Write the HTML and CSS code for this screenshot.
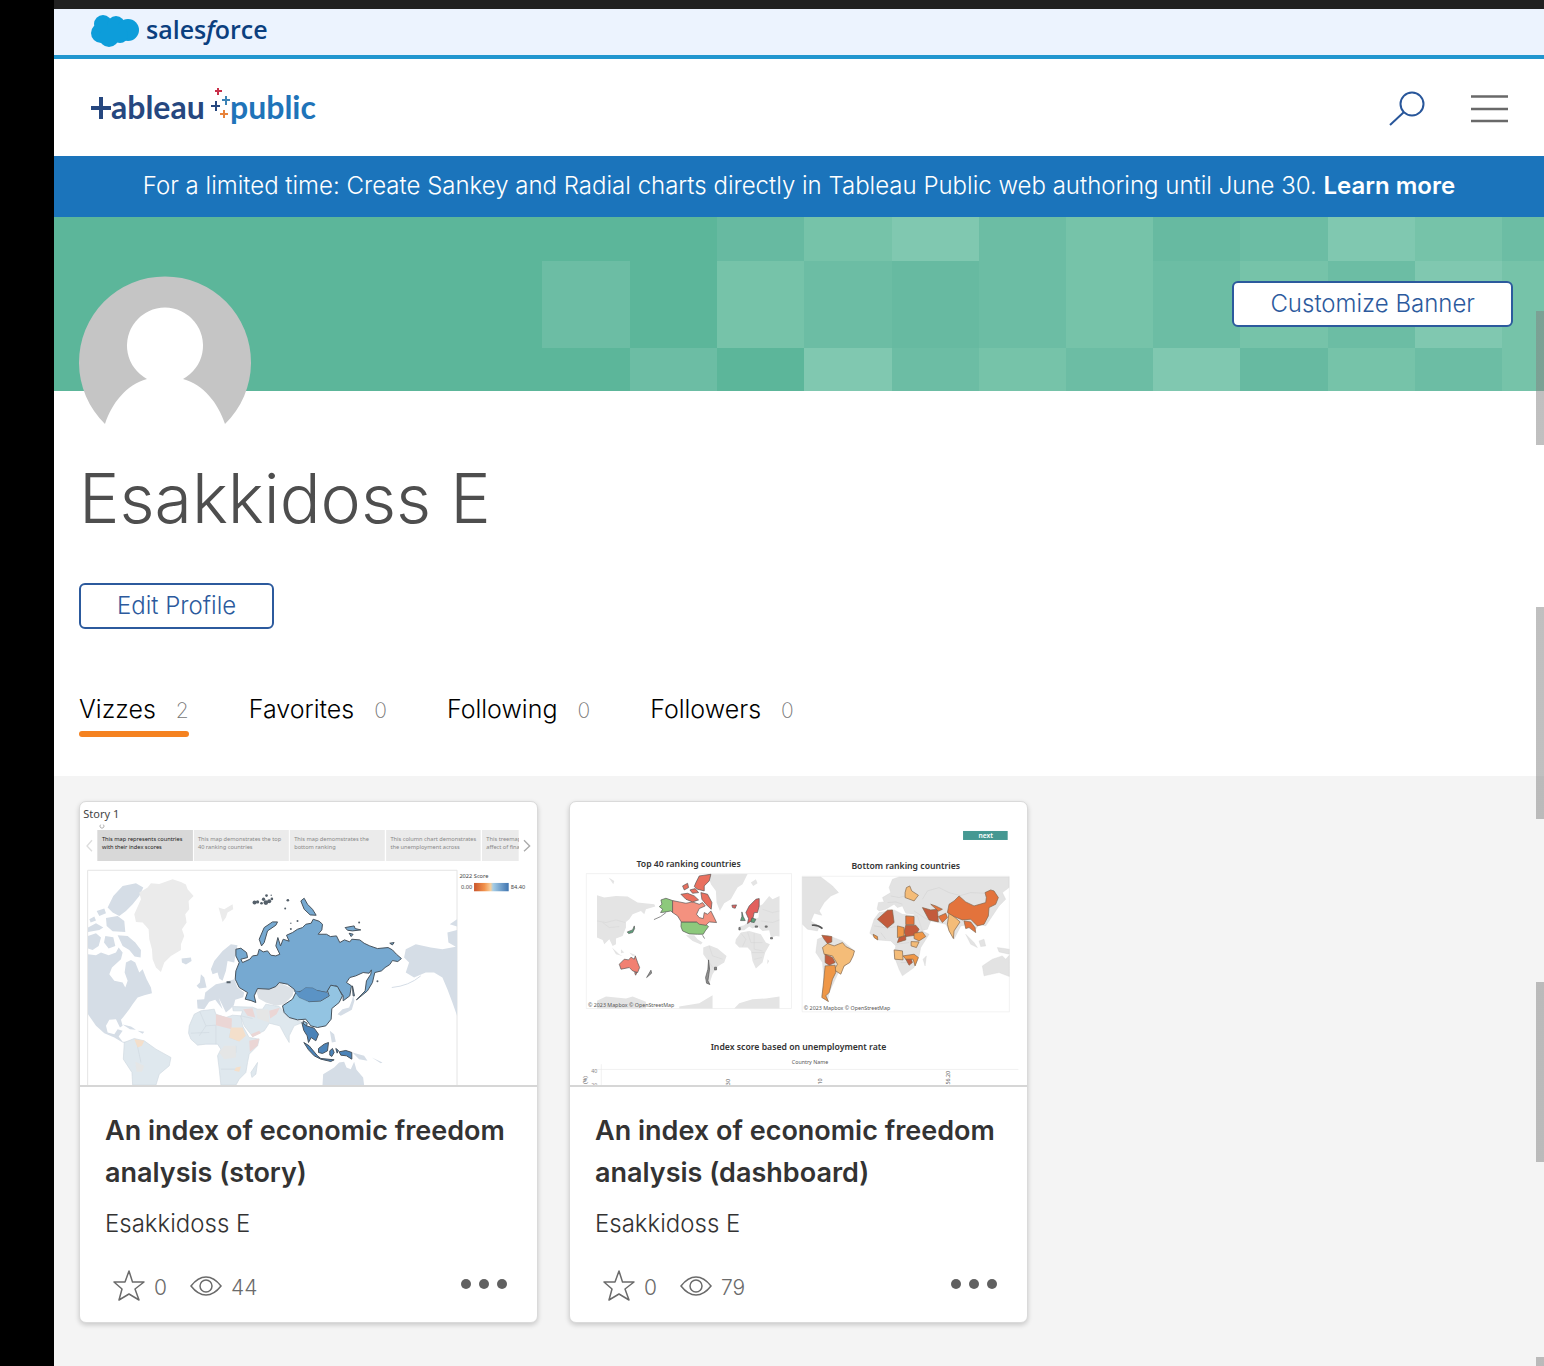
FILE: index.html
```html
<!DOCTYPE html>
<html lang="en">
<head>
<meta charset="utf-8">
<meta name="viewport" content="width=device-width, initial-scale=1">
<title>Esakkidoss E | Tableau Public</title>
<link rel="stylesheet" href="styles.css">
</head>
<body>
<div class="page">
  <div class="scroll-marks" aria-hidden="true"></div>

  <div class="brand-bar">
    <a href="#" class="brand-link" aria-label="Salesforce">
      <svg width="182" height="38" viewBox="0 0 182 38">
        <g fill="#0d9dda"><circle cx="11" cy="20" r="10"/><circle cx="13" cy="11" r="9"/><circle cx="26" cy="12" r="9"/><circle cx="38" cy="17" r="11"/><circle cx="19" cy="24" r="10"/><circle cx="30" cy="22" r="8"/><rect x="12" y="12" width="24" height="14"/></g>
        <text class="sf-text" x="56" y="26">sales<tspan font-style="italic">f</tspan>orce</text>
      </svg>
    </a>
  </div>

  <header class="site-header">
    <a href="#" class="brand-link" aria-label="Tableau Public">
      <svg width="230" height="44" viewBox="0 0 230 44">
        <path d="M1 22H21M11 11V33" fill="none" stroke="#26477f" stroke-width="4"/>
        <text class="tb-text" x="21" y="33" fill="#26477f">ableau</text>
        <text class="tb-text" x="140" y="33" fill="#1f74b9">public</text>
        <g stroke-width="2" fill="none">
          <path d="M128 2v7M125 5h7" stroke="#c9304a"/>
          <path d="M136 10v9M132 14h8" stroke="#3c83b5"/>
          <path d="M126 15v10M121 20h9" stroke="#26477f"/>
          <path d="M134 24v8M130 28h8" stroke="#e8833a"/>
        </g>
      </svg>
    </a>
    <div class="header-tools">
      <button class="icon-button" type="button" aria-label="Search">
        <svg width="36" height="36" viewBox="0 0 36 36" fill="none" stroke="#28569a" stroke-width="2"><circle cx="23" cy="14" r="11.5"/><path d="M15 22L1 35"/></svg>
      </button>
      <button class="icon-button" type="button" aria-label="Menu">
        <svg width="37" height="30" viewBox="0 0 37 30" stroke="#696969" stroke-width="2.5"><path d="M0 3.5H37M0 16H37M0 28H37"/></svg>
      </button>
    </div>
  </header>

  <p class="notice">For a limited time: Create Sankey and Radial charts directly in Tableau Public web authoring until June 30. <a href="#">Learn more</a></p>

  <section class="cover">
    <svg class="cover-pattern" viewBox="0 0 1490 174" preserveAspectRatio="xMaxYMid slice" aria-hidden="true">
      <rect width="1490" height="174" fill="#5cb69a"/>
      <g fill="#67baa1"><path d="M663 0h87v44h-87zM838 44h87v87h-87zM1099 0h87v44h-87zM1186 131h88v43h-88z"/></g>
      <g fill="#6cbda4"><path d="M488 44h88v87h-88zM576 131h87v43h-87zM750 44h88v87h-88zM838 131h87v43h-87zM925 0h87v131h-87zM1012 131h87v43h-87zM1099 44h87v87h-87zM1186 0h88v44h-88zM1274 44h87v87h-87zM1361 131h87v43h-87zM1448 0h42v44h-42z"/></g>
      <g fill="#76c3a9"><path d="M663 44h87v87h-87zM750 0h88v44h-88zM925 131h87v43h-87zM1012 0h87v131h-87zM1186 44h88v87h-88zM1274 131h87v43h-87zM1361 0h87v44h-87zM1448 44h42v130h-42z"/></g>
      <g fill="#80c8b0"><path d="M838 0h87v44h-87zM750 131h88v43h-88zM1099 131h87v43h-87zM1274 0h87v44h-87zM1361 44h87v87h-87z"/></g>
    </svg>
    <button class="button" type="button">Customize Banner</button>
  </section>

  <section class="profile">
    <svg class="avatar" width="172" height="172" viewBox="0 0 172 172" role="img" aria-label="Profile picture">
      <path fill="#c5c5c5" d="M26 148A86 86 0 1 1 146 148V172H26Z"/>
      <path fill="#fff" d="M26 148C33 127 47 109 68 103A38 38 0 1 1 104 103C125 109 139 127 146 148V172H26Z"/>
    </svg>
    <h1 class="name">Esakkidoss E</h1>
    <button class="button" type="button">Edit Profile</button>
    <nav class="tabs">
      <a href="#" class="tab tab-active">Vizzes <span class="count">2</span></a>
      <a href="#" class="tab">Favorites <span class="count">0</span></a>
      <a href="#" class="tab">Following <span class="count">0</span></a>
      <a href="#" class="tab">Followers <span class="count">0</span></a>
    </nav>
  </section>

  <main class="gallery">
    <article class="card">
      <svg class="thumb" viewBox="12 18 1372 850" role="img" aria-label="Story preview">
        <text class="viz-text" x="22" y="65" font-size="33" fill="#444">Story 1</text>
        <path d="M74 86a6 6 0 1 0 8 0" fill="none" stroke="#888" stroke-width="2"/>
        <path d="M64 102H351V195H64Z" fill="#d8d8d8"/>
        <path d="M354 102H639V195H354ZM642 102H927V195H642ZM931 102H1215V195H931ZM1219 102H1329V195H1219Z" fill="#ebebeb"/>
        <g fill="none" stroke="#ddd" stroke-width="4"><path d="M48 133L33 150L48 166"/><path d="M1345 133L1362 150L1345 166" stroke="#aaa"/></g>
        <g class="viz-text" font-size="17" fill="#222"><text x="78" y="135">This map represents countries</text><text x="78" y="159">with their index scores</text></g>
        <g class="viz-text" font-size="17" fill="#888"><text x="366" y="135">This map demonstrates the top</text><text x="366" y="159">40 ranking countries</text><text x="655" y="135">This map demomstrates the</text><text x="655" y="159">bottom ranking</text><text x="944" y="135">This column chart demonstrates</text><text x="944" y="159">the unemployment across</text><text x="1232" y="135">This treemap</text><text x="1232" y="159">affect of fina</text></g>
        <path d="M1330 102H1342V195H1330Z" fill="#fff"/>
        <path d="M35 870V223H1144V870" fill="none" stroke="#e4e4e4" stroke-width="3"/>
        <g class="viz-text" font-size="17" fill="#444"><text x="1151" y="247">2022 Score</text><text x="1156" y="278">0.00</text><text x="1305" y="278">84.40</text></g>
        <linearGradient id="score"><stop offset="0" stop-color="#c9562d"/><stop offset=".3" stop-color="#f2924b"/><stop offset=".48" stop-color="#f6cf9c"/><stop offset=".55" stop-color="#a5cde6"/><stop offset="1" stop-color="#3f74b0"/></linearGradient>
        <rect x="1195" y="261" width="104" height="25" fill="url(#score)"/>
        <g fill="#d5dde6">
          <path d="M36 475L60 478 75 470 98 478 120 470 128 455 140 470 135 490 108 515 100 535 115 555 140 560 148 575 155 555 146 530 150 500 165 492 178 500 190 530 200 520 212 550 225 575 228 592 205 598 185 605 170 625 160 640 145 660 135 672 140 690 132 695 120 670 100 672 90 690 95 710 115 715 125 700 140 705 128 722 140 738 160 738 165 745 140 740 115 725 85 712 60 690 36 655Z"/>
          <path d="M112 300L140 270 180 262 202 275 190 300 170 325 150 345 130 360 110 350 95 335ZM36 395L60 382 82 395 70 402 36 408ZM90 366L125 360 145 375 148 408 110 406 92 390ZM36 420L60 412 75 425 68 450 50 462 36 458ZM88 420L112 424 118 450 98 458 84 440ZM125 418L155 420 178 440 195 462 194 485 176 482 160 462 140 450ZM62 345L85 338 90 352 70 360ZM40 370L55 362 60 374 44 380Z"/>
          <path d="M405 520L415 495 440 465 465 445 485 448 480 470 475 500 455 495 450 525 445 540 440 555 430 548 425 530 410 535ZM362 570L372 560 375 535 385 545 392 575 370 578ZM317 488L345 485 347 495 330 506 318 500ZM363 612L385 610 388 590 400 580 420 565 445 560 475 550 485 575 505 590 502 604 478 612 474 628 462 640 450 650 438 625 428 605 440 640 418 612 400 618 385 640 365 638Z"/>
          <path d="M990 460L1020 445 1065 455 1100 460 1144 452V660L1130 620 1115 580 1100 545 1075 530 1050 530 1015 545 990 530 1000 500 985 485ZM1115 410L1144 402V455L1118 440ZM1122 385L1144 370V392Z"/>
          <path d="M785 655L800 640 820 635 828 615 832 600 836 615 828 642 795 660ZM740 868L742 835 775 815 790 800 805 798 812 815 825 820 835 798 842 822 862 845 865 868ZM830 770L865 780 875 795 850 790ZM888 785L920 800 915 802ZM762 705L775 715 780 738 768 740ZM140 686L165 692 180 702 162 700ZM185 705L205 708 200 714Z"/>
        </g>
        <path d="M948 575Q1000 570 1035 540" fill="none" stroke="#d5dde6" stroke-width="3"/>
        <path fill="#ebebeb" d="M175 355L195 310 190 290 215 275 225 262 250 264 290 250 315 258 330 266 335 280 353 300 338 315 340 340 328 355 332 380 318 400 325 420 315 445 315 462 285 480 265 500 255 528 240 515 230 490 228 460 220 430 218 400 200 380 180 378ZM428 335L445 340 470 325 472 340 455 350 450 365 440 378Z"/>
        <g fill="#dfe8ee" stroke="#d0d9e1" stroke-width="2">
          <path d="M340 690L355 655 375 645 415 640 420 655 450 665 470 658 495 660 500 690 520 725 550 730 545 750 520 775 515 800 510 830 490 850 480 868H435L430 820 425 780 435 760 425 745 390 745 365 748 345 730 338 712Z"/>
          <path d="M145 740L175 728 205 735 240 760 285 785 280 810 250 835 240 868H170L168 830 142 790ZM525 830L545 800 540 835 528 845ZM470 632L530 634 545 640 560 640 570 625 610 632 622 645 650 668 680 680 655 690 640 720V740L628 720 612 690 580 682 575 690 565 705 530 722 505 690 495 662 500 645 472 645Z"/>
          <path d="M372 648L390 690 370 720M390 690L420 688 420 745M467 700L460 725 490 735M430 770H480V750M345 712L400 710M435 820H490M495 660L530 668M180 730L195 800" fill="none"/>
        </g>
        <path d="M420 655L468 668 467 700 420 688ZM502 640L530 637 538 665 515 660ZM580 645L612 636 602 655 583 668ZM525 715L550 705 555 712 530 724ZM520 735L550 728 545 750 522 768Z" fill="#ebd6d5"/>
        <path d="M465 695L500 695 510 720 490 737 460 725ZM175 730L205 735 198 750 185 755ZM480 815L495 812 490 828 475 825Z" fill="#f4dfcb"/>
        <path d="M445 750H480V785L445 790 430 770ZM178 798L205 810 198 828 182 828ZM540 642L578 640 580 680 545 668Z" fill="#e5e6e6"/>
        <path d="M540 580L580 575 610 560 655 580 650 600 625 625 600 630 570 620 548 608Z" fill="#dce1e6"/>
        <g stroke="#47525c" stroke-width="3" stroke-linejoin="round" fill="#76a9d1">
          <path d="M480 460L495 457 512 470 515 485 495 490 500 500 522 490 530 480 545 478 550 460 562 468 575 465 585 478 600 480 612 475 600 450 606 425 614 450 622 430 640 436 632 418 650 410 665 400 680 395 690 385 706 382 712 370 730 376 740 385 738 402 727 415 752 415 764 422 782 420 792 440 806 432 822 438 828 430 852 432 865 442 882 450 905 458 937 455 950 462 962 475 977 488 966 497 950 494 942 506 928 515 917 525 897 530 890 560 875 585 842 612 868 585 872 555 885 535 887 522 880 532 862 530 840 540 822 545 812 560 827 570 822 600 802 615 802 600 782 570 762 575 752 590 702 580 660 590 655 580 635 565 610 560 600 572 580 580 545 578 535 600 540 620 525 614 508 610 515 590 490 575 478 550 480 525 490 500 480 480Z"/>
          <path d="M557 450L550 430 565 395 590 378 605 378 600 388 575 405 565 440ZM675 315L685 307 695 325 710 340 721 358 703 357 685 340ZM808 395L835 390 838 398 855 402 830 405 815 403ZM820 412L832 415 826 422ZM942 442L955 440 950 447ZM830 570L836 600 832 600Z"/>
          <path fill="#93c4e2" d="M620 630L650 610 660 590 700 617 735 615 760 600 755 585 765 568 785 572 800 600 790 620 768 638 766 670 750 690 725 695 705 690 690 670 665 672 640 665 625 650Z"/>
          <path fill="#5b93c5" stroke-width="1" d="M655 585L672 588 690 575 710 576 725 584 755 590 760 600 735 615 700 618 670 605Z"/>
          <path fill="#93c4e2" d="M682 675L694 682 690 700 685 700Z"/>
          <path fill="#4b83b8" d="M678 680L692 690 715 697 728 715 720 735 706 725 698 740 694 720 684 704ZM684 740L700 750 725 780 735 788 775 792 765 797 735 790 715 780 698 762ZM728 758L745 745 758 740 755 765 740 773 728 770ZM762 765L770 758 775 770 768 782 762 778ZM780 758L788 764 784 772ZM790 768L810 764 828 770V790L812 780 795 778Z"/>
        </g>
        <g fill="#55606a"><circle cx="536" cy="320" r="6"/><circle cx="545" cy="318" r="5"/><circle cx="557" cy="322" r="4"/><circle cx="563" cy="310" r="5"/><circle cx="570" cy="320" r="7"/><circle cx="580" cy="316" r="6"/><circle cx="588" cy="309" r="4"/><circle cx="572" cy="299" r="4"/><circle cx="586" cy="298" r="2"/><circle cx="636" cy="313" r="4"/><circle cx="628" cy="338" r="3"/><circle cx="665" cy="375" r="3"/><circle cx="645" cy="399" r="3"/><circle cx="645" cy="382" r="2"/><circle cx="850" cy="380" r="3"/><circle cx="905" cy="556" r="3"/><path d="M452 556H464V562H452Z"/></g>
      </svg>
      <div class="card-body">
        <h2 class="card-title">An index of economic freedom analysis (story)</h2>
        <a href="#" class="author">Esakkidoss E</a>
        <div class="stats">
          <button class="stat" type="button" aria-label="Favorite"><svg width="32" height="32" viewBox="0 0 32 32" fill="none" stroke="#6b6b6b" stroke-width="1.5" stroke-linejoin="round"><path d="M16 1L19.500 12H31L22 19L26 30L16 24L6 30L9 19L1 12H12Z"/></svg>0</button>
          <span class="stat"><svg width="32" height="20" viewBox="0 0 32 20" fill="none" stroke="#6b6b6b" stroke-width="1.5"><path d="M1 10Q8 1 16 1T31 10Q24 19 16 19T1 10Z"/><circle cx="16" cy="10" r="6"/></svg>44</span>
          <button class="more" type="button" aria-label="More actions"><svg width="46" height="10" viewBox="0 0 46 10" fill="#606060"><circle cx="5" cy="5" r="5"/><circle cx="23" cy="5" r="5"/><circle cx="41" cy="5" r="5"/></svg></button>
        </div>
      </div>
    </article>

    <article class="card">
      <svg class="thumb" viewBox="12 18 1372 850" role="img" aria-label="Dashboard preview">
        <rect x="1192" y="105" width="134" height="27" fill="#459892"/>
        <g class="viz-title" text-anchor="middle">
          <text x="1260" y="127" font-size="20" fill="#fff">next</text>
          <g font-size="26" fill="#333"><text x="368" y="212">Top 40 ranking countries</text><text x="1020" y="220">Bottom ranking countries</text><text x="698" y="764">Index score based on unemployment rate</text></g>
        </g>
        <g fill="none" stroke="#ececec" stroke-width="2"><path d="M61 233H677V638H61ZM709 241H1331V648H709ZM106 805V868M76 821H1358"/></g>
        <g fill="#e4e4e4">
          <path d="M93 298L115 305 150 300 185 302 215 320 265 325 268 332 240 340 235 355 225 345 200 355 190 370 180 378 180 395 170 420 150 428 150 445 140 450 130 430 115 445 110 432 93 425ZM128 245L145 255 142 265ZM138 455L160 475 170 480 150 475ZM165 460L175 470 165 472ZM190 470L210 478 200 480Z"/>
          <path d="M425 235L545 234 530 265 515 275 495 310 475 322 462 345 452 320 450 285 435 265ZM555 260L570 250 575 262 562 270Z"/>
          <path d="M641 300L620 310 610 300 590 325 580 330 578 365 550 375 535 388 520 392 522 403 535 403 550 392 560 398 575 392 590 405 610 403 615 425 630 420 641 422ZM510 430L525 410 550 405 585 415 600 440 612 445 598 470 590 500 570 518 560 495 555 465 545 455 520 455 508 442ZM605 490L610 495 604 505Z"/>
          <path d="M360 418L385 418 395 430 410 440 405 446 380 435ZM412 455L430 448 455 458 482 480 475 500 455 512 440 535 430 565 422 560 428 520 426 495 412 475ZM93 615L120 602 150 605 180 608 200 602 240 618V638H93ZM340 632L400 622 440 598V638H340ZM505 638L520 622 560 610 600 608 641 602V638Z"/>
        </g>
        <g fill="none" stroke="#cfcfcf" stroke-width="1"><path d="M93 375L120 380 150 372 178 380M110 380L130 395 160 392M525 412L540 430 530 452M545 408L555 440H590M565 412V460L590 465M558 470H595M565 490L588 485M590 340L620 350 641 345M585 375L620 380 641 372M430 450L440 480 470 490M430 500L445 520"/></g>
        <g stroke="#555" stroke-width="2" stroke-linejoin="round">
          <path fill="#8dc97c" d="M320 314L300 307 285 312 288 325 280 332 290 340 284 350 300 348 315 345 320 350ZM346 378H392L415 382 428 392 418 405 412 415 395 415 370 414 350 405 345 392Z"/>
          <path fill="#f4917f" d="M320 314L340 318 360 322 380 318 400 325 410 320 418 330 400 338 392 355 400 365 412 368 415 350 425 355 435 345 445 365 452 380 430 378 420 388 400 385 392 378H346L335 360 320 350Z"/>
          <path fill="#e9705f" d="M390 260L400 240 435 235 430 255 415 270 415 285 395 280 385 272ZM345 295L365 292 385 300 398 312 380 318 360 310ZM405 290L425 295 438 320 436 340 420 325 408 310ZM350 270L365 262 368 275 355 282ZM372 282L388 278 398 290 380 292Z"/>
          <path fill="#f18072" d="M160 505L175 490 188 492 195 484 205 490 208 480 215 500 221 515 215 530 200 525 190 515 165 520ZM206 530H213L209 538Z"/>
          <path fill="#e2605d" d="M540 350L550 330 570 310 580 308 580 330 575 350 565 350 560 372 545 383 548 368ZM498 328L512 327 508 337 500 335Z"/>
          <path fill="#5ba27b" d="M528 348L532 362 538 374 524 374 528 362ZM558 366L570 370 565 380 555 378ZM184 408L200 402 205 390 206 398 200 410 188 413Z"/>
          <path fill="#666" d="M428 492L431 520 426 555 432 566 422 562 419 545 426 520ZM255 523L257 532 242 545ZM446 514H452V522H446ZM568 390H575V394H568ZM598 390H604V394H598ZM614 425H620V429H614ZM519 395H523V402H519Z" fill-opacity=".7"/>
          <path fill="none" d="M300 350L284 362 264 371M410 418L416 428"/>
        </g>
        <g class="viz-text" font-size="16" fill="#555"><text x="66" y="633">© 2023 Mapbox  © OpenStreetMap</text><text x="714" y="642">© 2023 Mapbox  © OpenStreetMap</text><text x="678" y="805">Country Name</text><text x="76" y="831" fill="#888">40</text><text x="76" y="874" fill="#888">20</text><text transform="translate(62 864) rotate(-90)">(%)</text><text transform="translate(492 868) rotate(-90)">30</text><text transform="translate(768 866) rotate(-90)">10</text><text transform="translate(1152 866) rotate(-90)">56.20</text></g>
        <g fill="#e3e3e3" stroke="#d2d2d2">
          <path d="M710 243H765L800 270 818 290 795 300 775 320 760 345 768 358 745 352 735 375 760 392 755 405 725 400 710 385Z"/>
          <path d="M934 340L938 320 955 318 950 305 975 290 970 275 980 250 1000 243H1330V275L1310 290 1320 310 1300 330 1260 390 1240 385 1230 400 1215 385 1185 390 1165 430 1140 385 1095 375 1085 400 1065 405 1045 355 1020 352 1010 330 995 335 985 325 960 340 940 345Z"/>
          <path d="M912 412L925 370 940 350 985 342 1010 355 1055 360 1070 405 1090 415 1065 455 1060 480 1045 515 1010 540 1000 520 985 480 990 450 975 435 935 432ZM1072 490L1082 480 1078 510ZM755 430L785 418 830 435 866 465 855 495 820 525 790 590 785 617 768 600 775 560 770 500 750 470ZM1250 510L1280 490 1310 480 1320 490 1331 478V542L1300 530 1255 540ZM1200 415L1225 440 1235 455 1215 445ZM1240 435L1255 430 1260 450 1245 452ZM1295 455L1331 460V475L1300 468Z"/>
          <path fill="none" stroke="#c6c6c6" d="M1070 310L1085 285 1120 275 1150 290 1180 298M1180 300L1215 290 1258 292M975 300L1000 305 1018 300M965 320L990 318 1010 325M925 390L965 396 990 392M945 410L960 430M1045 345L1075 365 1095 375M1005 500H1030M990 445L1030 440"/>
        </g>
        <g stroke="#80634a" stroke-width="2" stroke-linejoin="round">
          <path fill="#f4bc78" d="M770 455L785 443 805 450 830 440 840 452 866 465 862 480 852 500 835 510 825 535 805 522 815 505 800 480 775 475ZM1018 290L1022 275 1032 270 1038 285 1058 298 1045 315 1018 305ZM1145 385L1150 350 1165 362 1183 378 1165 405 1163 428 1150 405ZM1036 437L1060 438 1052 455 1036 450ZM985 462L1010 465 1012 492 987 490Z"/>
          <path fill="#c35b3c" d="M935 370L965 343 980 342 985 380 965 396ZM1020 388H1050L1060 400 1050 418 1020 422 1015 408ZM1070 335L1095 342 1115 340 1118 378 1090 372ZM768 418L798 422 798 438 785 443 775 430ZM778 475L800 485 808 500 790 508 778 500ZM1020 490L1035 485 1040 500 1030 508ZM1000 425L1020 418 1020 432 995 440Z"/>
          <path fill="#e3733c" d="M1145 350L1150 325 1165 315 1180 300 1200 318 1225 330 1260 320 1262 305 1258 290 1275 282 1285 285 1298 305 1290 325 1270 335 1268 360 1255 385 1235 390 1215 370 1190 372 1165 362ZM1095 325L1110 330 1130 340 1118 346ZM1118 362L1140 352 1145 365 1130 380ZM1020 360L1045 362V386H1020ZM1195 375L1215 378 1228 395 1230 410 1210 395 1200 398Z"/>
          <path fill="#ef9747" d="M778 510L808 508 810 530 800 550 790 590 780 600 788 617 768 605 772 570ZM1045 412L1070 408 1080 422 1060 435 1045 428ZM995 390L1015 395 1015 420 995 425ZM1012 480L1045 475 1058 485 1048 510 1042 490 1020 490ZM922 415L935 422 936 432 925 425Z"/>
          <path fill="none" stroke="#555" stroke-width="5" d="M738 388Q755 385 770 398"/>
        </g>
      </svg>
      <div class="card-body">
        <h2 class="card-title">An index of economic freedom analysis (dashboard)</h2>
        <a href="#" class="author">Esakkidoss E</a>
        <div class="stats">
          <button class="stat" type="button" aria-label="Favorite"><svg width="32" height="32" viewBox="0 0 32 32" fill="none" stroke="#6b6b6b" stroke-width="1.5" stroke-linejoin="round"><path d="M16 1L19.500 12H31L22 19L26 30L16 24L6 30L9 19L1 12H12Z"/></svg>0</button>
          <span class="stat"><svg width="32" height="20" viewBox="0 0 32 20" fill="none" stroke="#6b6b6b" stroke-width="1.5"><path d="M1 10Q8 1 16 1T31 10Q24 19 16 19T1 10Z"/><circle cx="16" cy="10" r="6"/></svg>79</span>
          <button class="more" type="button" aria-label="More actions"><svg width="46" height="10" viewBox="0 0 46 10" fill="#606060"><circle cx="5" cy="5" r="5"/><circle cx="23" cy="5" r="5"/><circle cx="41" cy="5" r="5"/></svg></button>
        </div>
      </div>
    </article>
  </main>
</div>
</body>
</html>
```
FILE: styles.css
```css
* {
  box-sizing: border-box;
}

body {
  margin: 0;
  background: #000;
  font-family: Inter, "Liberation Sans", sans-serif;
  font-weight: 300;
  color: #333;
}

h1, h2, p {
  margin: 0;
}

a {
  color: inherit;
  text-decoration: none;
}

button {
  font: inherit;
  color: inherit;
  cursor: pointer;
}

svg {
  display: block;
}

.page {
  position: relative;
  display: flex;
  flex-direction: column;
  min-height: 100vh;
  margin-left: 54px;
  border-top: 9px solid #212121;
  background: #fff;
}

.scroll-marks {
  position: absolute;
  z-index: 2;
  top: 0;
  right: 0;
  bottom: 0;
  width: 8px;
  background: linear-gradient(transparent 302px, #8080807f 302px 436px, transparent 436px 598px, #8080807f 598px 810px, transparent 810px 973px, #8080807f 973px 1153px, transparent 1153px 1348px, #8080807f 1348px);
}

.brand-bar {
  padding: 4px 36px;
  border-bottom: 4px solid #2196cf;
  background: #ecf3fe;
}

.brand-link {
  display: inline-block;
  vertical-align: top;
}

.sf-text {
  font: 600 25px "Open Sans", sans-serif;
  fill: #0b3f7f;
}

.tb-text {
  font: 700 32px Lato, sans-serif;
}

.site-header {
  display: flex;
  align-items: center;
  justify-content: space-between;
  height: 97px;
  padding: 0 36px;
}

.header-tools {
  display: flex;
  align-items: center;
  gap: 46px;
}

.icon-button, .more {
  padding: 0;
  border: 0;
  background: none;
}

.notice {
  padding: 13px 24px 15px;
  background: #1b74bb;
  color: #fff;
  font-size: 24px;
  line-height: 33px;
  text-align: center;
}

.notice a {
  font-weight: 600;
}

.cover {
  position: relative;
  display: flex;
  align-items: center;
  justify-content: flex-end;
  height: 174px;
  padding: 0 31px;
}

.cover-pattern {
  position: absolute;
  inset: 0;
  width: 100%;
  height: 100%;
}

.button {
  position: relative;
  height: 46px;
  padding: 0 36px;
  border: 2px solid #2c5a9d;
  border-radius: 6px;
  background: #fff;
  color: #2c5a9d;
  font-size: 24px;
  line-height: 40px;
}

.profile {
  position: relative;
  padding: 0 25px 39px;
}

.avatar {
  margin-top: -115px;
}

.name {
  margin: 8px 0 42px;
  color: #4e4e4e;
  font-size: 68px;
  font-weight: 300;
  line-height: 85px;
}

.tabs {
  display: flex;
  gap: 60px;
  margin-top: 60px;
  color: #000;
  font-size: 25px;
  line-height: 40px;
}

.tab {
  position: relative;
  display: flex;
  gap: 20px;
  padding-bottom: 8px;
}

.tab-active::after {
  content: "";
  position: absolute;
  right: 0;
  bottom: 0;
  left: 0;
  height: 6px;
  border-radius: 3px;
  background: #f58220;
}

.count {
  height: 40px;
  color: #777;
  font-size: 21px;
  font-weight: 200;
  line-height: 44px;
}

.gallery {
  flex: 1;
  display: grid;
  grid-template-columns: repeat(3, 1fr);
  align-items: start;
  gap: 31px;
  padding: 25px 26px 43px 25px;
  background: #f4f4f4;
}

.card {
  overflow: hidden;
  border: 1px solid #dadada;
  border-radius: 7px;
  background: #fff;
  box-shadow: 0 2px 5px #0000002e;
}

.thumb {
  width: 100%;
  height: auto;
}

.viz-text {
  font-family: "Noto Sans", sans-serif;
  font-weight: 400;
}

.viz-title {
  font-family: "Noto Sans", sans-serif;
  font-weight: 600;
}

.card-body {
  padding: 23px 20px 16px 25px;
  border-top: 2px solid #d6d6d6;
}

.card-title {
  font-size: 27px;
  font-weight: 600;
  line-height: 42px;
}

.author {
  display: block;
  margin-top: 14px;
  font-size: 24px;
  line-height: 32px;
}

.stats {
  display: flex;
  align-items: center;
  gap: 23px;
  margin-top: 30px;
  padding-left: 8px;
}

.stat {
  display: flex;
  align-items: center;
  gap: 9px;
  padding: 0;
  border: 0;
  background: none;
  color: #6b6b6b;
  font-size: 21px;
  line-height: 36px;
}

.stat svg {
  margin-bottom: 4px;
}

.more {
  margin: 0 10px 8px auto;
}
```
